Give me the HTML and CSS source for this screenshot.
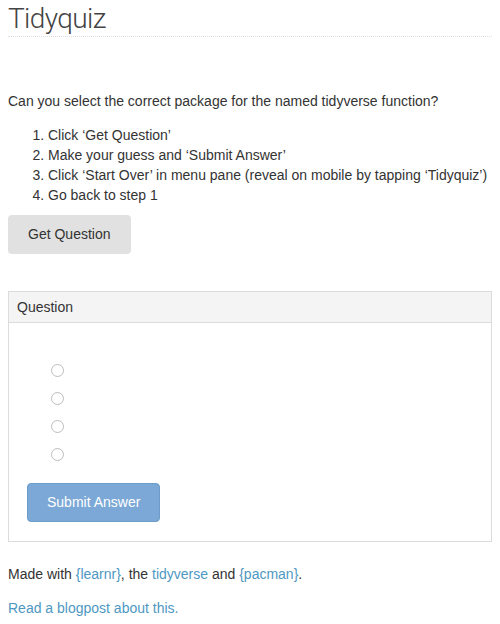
FILE: index.html
```html
<!DOCTYPE html>
<html>
<head>
<meta charset="utf-8">
<link rel="stylesheet" href="styles.css">
</head>
<body>
<div class="page">
  <header class="topbar">
    <h1 class="title">Tidyquiz</h1>
  </header>
  <p class="intro">Can you select the correct package for the named tidyverse function?</p>
  <ol class="steps">
    <li>Click ‘Get Question’</li>
    <li>Make your guess and ‘Submit Answer’</li>
    <li>Click ‘Start Over’ in menu pane (reveal on mobile by tapping ‘Tidyquiz’)</li>
    <li>Go back to step 1</li>
  </ol>
  <button class="btn btn-default">Get Question</button>
  <section class="panel">
    <div class="panel-heading">Question</div>
    <div class="panel-body">
      <div class="choices">
        <label class="choice"><input type="radio" name="ans"></label>
        <label class="choice"><input type="radio" name="ans"></label>
        <label class="choice"><input type="radio" name="ans"></label>
        <label class="choice"><input type="radio" name="ans"></label>
      </div>
      <button class="btn btn-primary" disabled>Submit Answer</button>
    </div>
  </section>
  <p class="footer">Made with <a href="#">{learnr}</a>, the <a href="#">tidyverse</a> and <a href="#">{pacman}</a>.</p>
  <p class="footer blog"><a href="#">Read a blogpost about this.</a></p>
</div>
</body>
</html>
```
FILE: styles.css
```css
html, body {
  margin: 0;
  padding: 0;
  background: #fff;
}
body {
  font-family: "Liberation Sans", Arial, sans-serif;
  font-size: 14px;
  line-height: 20px;
  color: #333;
}
.page {
  padding: 0 8px;
}
.topbar {
  height: 36px;
  border-bottom: 1px dotted #dedede;
}
.title {
  margin: 0;
  font-family: Roboto, "Liberation Sans", sans-serif;
  font-weight: 300;
  font-size: 28px;
  line-height: 37px;
  color: #444;
  letter-spacing: -0.6px;
}
.intro {
  margin: 54px 0 0;
}
.steps {
  margin: 14px 0 0;
  padding-left: 40px;
}
.btn {
  display: inline-block;
  font-family: "Liberation Sans", Arial, sans-serif;
  font-size: 14px;
  line-height: 19px;
  padding: 10px 20px;
  border: none;
  border-radius: 4px;
}
.btn-default {
  margin-top: 10px;
  background: #e1e1e1;
  color: #333;
}
.btn-primary {
  background: #7ba8d6;
  color: #fff;
  border: 1px solid #6c9cc9;
  padding: 9px 19px;
}
.panel {
  margin-top: 37px;
  border: 1px solid #dcdcdc;
}
.panel-heading {
  background: #f4f4f4;
  border-bottom: 1px solid #dcdcdc;
  padding: 5px 8px;
  line-height: 20px;
}
.panel-body {
  padding: 41px 18px 19px;
}
.choices {
  display: flex;
  flex-direction: column;
  gap: 15px;
  padding-left: 24px;
  margin-bottom: 22px;
}
.choice {
  display: block;
  height: 13px;
}
.choice input {
  appearance: none;
  -webkit-appearance: none;
  margin: 0;
  width: 13px;
  height: 13px;
  border: 1px solid #bdbdbd;
  border-radius: 50%;
  background: #fff;
  display: block;
}
.footer {
  margin: 22px 0 0;
}
.footer.blog {
  margin-top: 14px;
}
a {
  color: #4e98c2;
  text-decoration: none;
}
```
